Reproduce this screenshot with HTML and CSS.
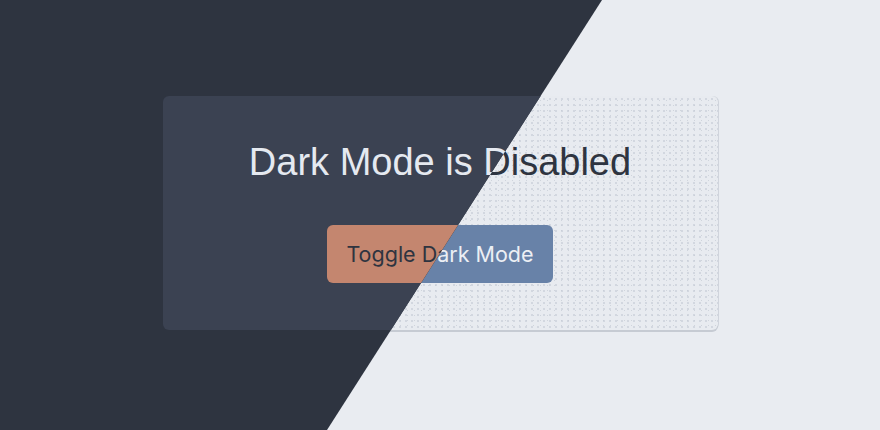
FILE: index.html
```html
<!DOCTYPE html>
<html lang="en">
<head>
<meta charset="utf-8">
<title>Dark Mode</title>
<link rel="stylesheet" href="styles.css">
</head>
<body>
<div class="stage">
  <div class="scene scene-light">
    <div class="card">
      <h1 class="title">Dark Mode is Disabled</h1>
      <button class="toggle" type="button">Toggle Dark Mode</button>
    </div>
  </div>
  <div class="scene scene-dark" aria-hidden="true">
    <div class="card">
      <h1 class="title">Dark Mode is Disabled</h1>
      <button class="toggle" type="button" tabindex="-1">Toggle Dark Mode</button>
    </div>
  </div>
</div>
</body>
</html>
```
FILE: styles.css
```css
html, body {
  margin: 0;
  padding: 0;
}
body {
  width: 880px;
  height: 430px;
  overflow: hidden;
}
.stage {
  display: grid;
  width: 880px;
  height: 430px;
}
.scene {
  grid-area: 1 / 1;
  display: flex;
  align-items: center;
  justify-content: center;
  padding-bottom: 4px;
}
.scene-light {
  background: #e9ecf1;
}
.scene-dark {
  background: #2e3440;
  clip-path: polygon(0 0, 602px 0, 327px 430px, 0 430px);
}
.card {
  box-sizing: border-box;
  width: 555px;
  height: 234px;
  border-radius: 6px;
  display: flex;
  flex-direction: column;
  align-items: center;
  padding-top: 44px;
}
.scene-light .card {
  background-color: #e8ebf0;
  background-image:
    radial-gradient(circle, #c6ccd6 0.6px, transparent 0.9px),
    radial-gradient(circle, #cfd4dc 0.6px, transparent 0.9px);
  background-size: 6px 6px, 7px 5px;
  background-position: 0 0, 3px 2px;
  box-shadow: 0 2px 0 #c6cbd3, 1px 0 0 #d0d4dc;
}
.scene-dark .card {
  background: #3b4252;
}
.title {
  margin: 0;
  font-family: "Liberation Sans", Arial, sans-serif;
  font-weight: 400;
  font-size: 38px;
  line-height: 44px;
  letter-spacing: 0;
}
.scene-light .title {
  color: #2e3440;
}
.scene-dark .title {
  color: #e5e9f0;
}
.toggle {
  margin-top: 41px;
  width: 226px;
  height: 58px;
  border: none;
  border-radius: 6px;
  font-family: Inter, "Noto Sans", sans-serif;
  font-size: 21.5px;
  font-weight: 400;
  padding: 0;
  cursor: pointer;
}
.scene-light .toggle {
  background: #6882a8;
  color: #eceff4;
}
.scene-dark .toggle {
  background: #c4866f;
  color: #2e3440;
}
```
